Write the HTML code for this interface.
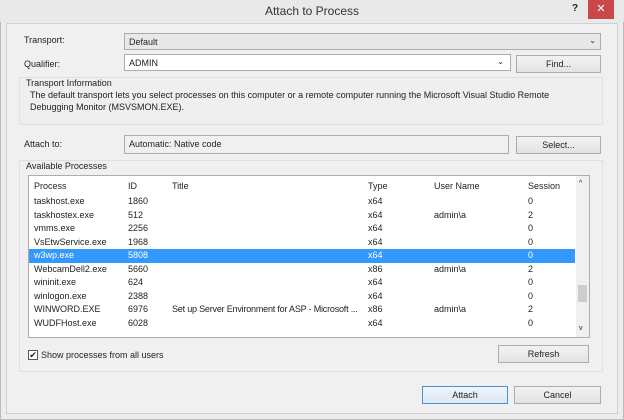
<!DOCTYPE html>
<html><head><style>
*{box-sizing:border-box;margin:0;padding:0}
body{width:624px;height:420px;overflow:hidden;background:#fff;font-family:"Liberation Sans",sans-serif;font-size:9px;color:#222;position:relative}
.a{position:absolute}
.box{position:absolute;border:1px solid #adadad;background:#fff}
.btn{position:absolute;border:1px solid #acacac;background:linear-gradient(#f2f2f2,#e3e3e3);text-align:center;line-height:16px}
.row{position:absolute;left:0;width:546px;height:13.5px;line-height:13.5px}
.row span{position:absolute;white-space:nowrap}
</style></head><body>
<div class="a" style="left:0;top:0;width:624px;height:420px;background:#ececec;border:1px solid #bbb"></div>
<div class="a" style="left:0;top:0;width:624px;height:22px;background:#e9e9e9"></div>
<div class="a" style="left:0;top:4px;width:624px;text-align:center;font-size:12px;color:#333">Attach to Process</div>
<div class="a" style="left:572px;top:3px;font-size:10px;font-weight:bold">?</div>
<div class="a" style="left:588px;top:0;width:26px;height:19px;background:#c9494a;color:#fff;text-align:center;font-size:11px;line-height:19px">✕</div>
<div class="a" style="left:6px;top:23px;width:612px;height:391px;background:#f0f0f0;border:1px solid #d0d0d0"></div>

<div class="a" style="left:24px;top:35px">Transport:</div>
<div class="box" style="left:124px;top:33px;width:477px;height:17px;background:#e8e8e8;padding:3px 4px">Default<span style="position:absolute;right:4px;top:2px;font-size:8px">⌄</span></div>
<div class="a" style="left:24px;top:59px">Qualifier:</div>
<div class="box" style="left:124px;top:54px;width:387px;height:17px;padding:3px 4px">ADMIN<span style="position:absolute;right:6px;top:2px;font-size:8px">⌄</span></div>
<div class="btn" style="left:516px;top:55px;width:85px;height:18px">Find...</div>

<div class="a" style="left:19px;top:77px;width:584px;height:48px;border:1px solid #e0e0e0;background:#efefef"></div>
<div class="a" style="left:26px;top:78px">Transport Information</div>
<div class="a" style="left:30px;top:89px;line-height:12px;width:565px">The default transport lets you select processes on this computer or a remote computer running the Microsoft Visual Studio Remote Debugging Monitor (MSVSMON.EXE).</div>

<div class="a" style="left:24px;top:139px">Attach to:</div>
<div class="box" style="left:124px;top:135px;width:385px;height:19px;background:#f0f0f0;padding:3px 4px">Automatic: Native code</div>
<div class="btn" style="left:516px;top:136px;width:85px;height:18px">Select...</div>

<div class="a" style="left:19px;top:160px;width:584px;height:212px;border:1px solid #e0e0e0"></div>
<div class="a" style="left:26px;top:161px">Available Processes</div>
<div class="box" style="left:28px;top:175px;width:562px;height:163px">
 <div class="row" style="top:2px;height:17px;line-height:17px"><span style="left:5px">Process</span><span style="left:99px">ID</span><span style="left:143px">Title</span><span style="left:339px">Type</span><span style="left:405px">User Name</span><span style="left:499px">Session</span></div>
 <div class="a" style="left:547px;top:0;width:13px;height:161px;background:#f0f0f0"></div>
 <div class="a" style="left:550px;top:4px;font-size:7px">^</div>
 <div class="a" style="left:549px;top:109px;width:9px;height:17px;background:#cdcdcd"></div>
 <div class="a" style="left:550px;top:149px;font-size:7px">v</div>
 <div style="position:absolute;top:19px;left:0">
 <div class="row" style="top:0"><span style="left:5px">taskhost.exe</span><span style="left:99px">1860</span><span style="left:339px">x64</span><span style="left:499px">0</span></div>
 <div class="row" style="top:13.5px"><span style="left:5px">taskhostex.exe</span><span style="left:99px">512</span><span style="left:339px">x64</span><span style="left:405px">admin\a</span><span style="left:499px">2</span></div>
 <div class="row" style="top:27px"><span style="left:5px">vmms.exe</span><span style="left:99px">2256</span><span style="left:339px">x64</span><span style="left:499px">0</span></div>
 <div class="row" style="top:40.5px"><span style="left:5px">VsEtwService.exe</span><span style="left:99px">1968</span><span style="left:339px">x64</span><span style="left:499px">0</span></div>
 <div class="row" style="top:54px;background:#3399ff;color:#fff"><span style="left:5px">w3wp.exe</span><span style="left:99px">5808</span><span style="left:339px">x64</span><span style="left:499px">0</span></div>
 <div class="row" style="top:67.5px"><span style="left:5px">WebcamDell2.exe</span><span style="left:99px">5660</span><span style="left:339px">x86</span><span style="left:405px">admin\a</span><span style="left:499px">2</span></div>
 <div class="row" style="top:81px"><span style="left:5px">wininit.exe</span><span style="left:99px">624</span><span style="left:339px">x64</span><span style="left:499px">0</span></div>
 <div class="row" style="top:94.5px"><span style="left:5px">winlogon.exe</span><span style="left:99px">2388</span><span style="left:339px">x64</span><span style="left:499px">0</span></div>
 <div class="row" style="top:108px"><span style="left:5px">WINWORD.EXE</span><span style="left:99px">6976</span><span style="left:143px;letter-spacing:-0.2px">Set up Server Environment for ASP - Microsoft ...</span><span style="left:339px">x86</span><span style="left:405px">admin\a</span><span style="left:499px">2</span></div>
 <div class="row" style="top:121.5px"><span style="left:5px">WUDFHost.exe</span><span style="left:99px">6028</span><span style="left:339px">x64</span><span style="left:499px">0</span></div>
 </div>
</div>
<div class="a" style="left:28px;top:350px;width:10px;height:10px;border:1px solid #555;background:#fff;font-size:9px;line-height:8px;text-align:center">✔</div>
<div class="a" style="left:41px;top:350px">Show processes from all users</div>
<div class="btn" style="left:498px;top:345px;width:91px;height:18px">Refresh</div>
<div class="btn" style="left:422px;top:386px;width:86px;height:18px;border-color:#4a90d9;background:linear-gradient(#eef4fa,#dde8f3)">Attach</div>
<div class="btn" style="left:514px;top:386px;width:87px;height:18px">Cancel</div>
</body></html>
